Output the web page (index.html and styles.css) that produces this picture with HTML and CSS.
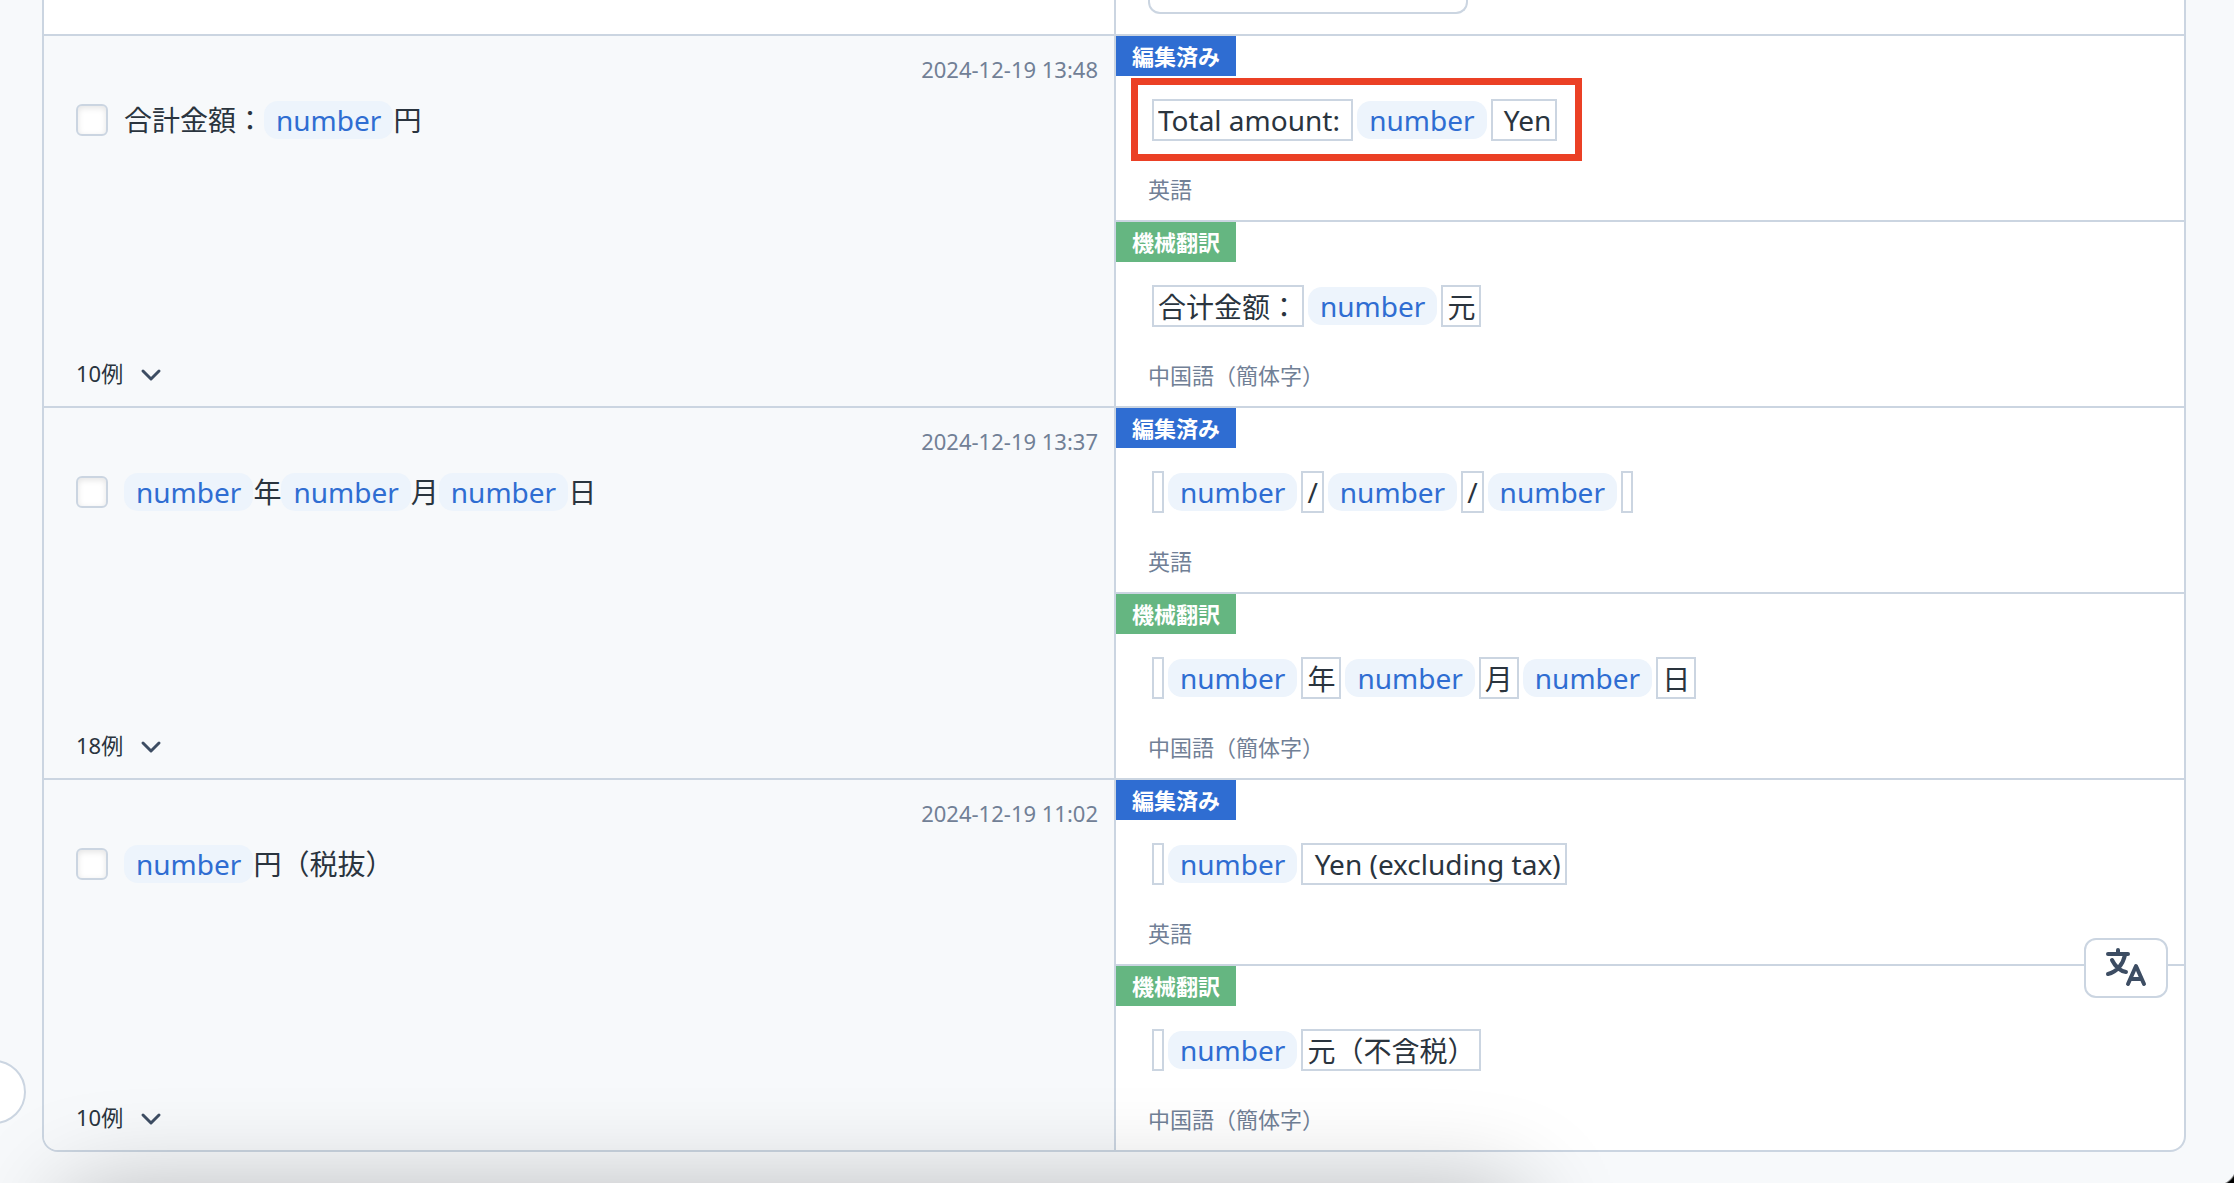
FILE: index.html
```html
<!DOCTYPE html>
<html lang="ja">
<head>
<meta charset="utf-8">
<meta name="viewport" content="width=device-width, initial-scale=1">
<title>翻訳一覧</title>
<link rel="stylesheet" href="styles.css">
</head>
<body>
<main class="page">
  <div class="list">
    <section class="row row-head">
      <div class="source source-plain"></div>
      <div class="targets"><div class="filter"></div></div>
    </section>

    <section class="row">
      <div class="source">
        <time class="date">2024-12-19 13:48</time>
        <label class="phrase"><input class="check" type="checkbox"><span class="phrase-text">合計金額：<span class="chip">number</span>円</span></label>
        <button class="examples" type="button">10例<svg class="chevron" viewBox="0 0 32 32" aria-hidden="true"><path d="M8 14l8 8 8-8"/></svg></button>
      </div>
      <div class="targets">
        <article class="target">
          <span class="tag tag-edited">編集済み</span>
          <div class="tokens tokens-marked"><input class="seg" aria-label="訳文" value="Total amount: "><span class="chip">number</span><input class="seg" aria-label="訳文" value=" Yen"></div>
          <span class="lang">英語</span>
        </article>
        <article class="target">
          <span class="tag tag-machine">機械翻訳</span>
          <div class="tokens"><input class="seg" aria-label="訳文" value="合计金额："><span class="chip">number</span><input class="seg" aria-label="訳文" value="元"></div>
          <span class="lang">中国語（簡体字）</span>
        </article>
      </div>
    </section>

    <section class="row">
      <div class="source">
        <time class="date">2024-12-19 13:37</time>
        <label class="phrase"><input class="check" type="checkbox"><span class="phrase-text"><span class="chip">number</span>年<span class="chip">number</span>月<span class="chip">number</span>日</span></label>
        <button class="examples" type="button">18例<svg class="chevron" viewBox="0 0 32 32" aria-hidden="true"><path d="M8 14l8 8 8-8"/></svg></button>
      </div>
      <div class="targets">
        <article class="target">
          <span class="tag tag-edited">編集済み</span>
          <div class="tokens"><input class="seg seg-empty" aria-label="訳文" value=""><span class="chip">number</span><input class="seg" aria-label="訳文" value="/"><span class="chip">number</span><input class="seg" aria-label="訳文" value="/"><span class="chip">number</span><input class="seg seg-empty" aria-label="訳文" value=""></div>
          <span class="lang">英語</span>
        </article>
        <article class="target">
          <span class="tag tag-machine">機械翻訳</span>
          <div class="tokens"><input class="seg seg-empty" aria-label="訳文" value=""><span class="chip">number</span><input class="seg" aria-label="訳文" value="年"><span class="chip">number</span><input class="seg" aria-label="訳文" value="月"><span class="chip">number</span><input class="seg" aria-label="訳文" value="日"></div>
          <span class="lang">中国語（簡体字）</span>
        </article>
      </div>
    </section>

    <section class="row">
      <div class="source">
        <time class="date">2024-12-19 11:02</time>
        <label class="phrase"><input class="check" type="checkbox"><span class="phrase-text"><span class="chip">number</span>円（税抜）</span></label>
        <button class="examples" type="button">10例<svg class="chevron" viewBox="0 0 32 32" aria-hidden="true"><path d="M8 14l8 8 8-8"/></svg></button>
      </div>
      <div class="targets">
        <article class="target">
          <span class="tag tag-edited">編集済み</span>
          <div class="tokens"><input class="seg seg-empty" aria-label="訳文" value=""><span class="chip">number</span><input class="seg" aria-label="訳文" value=" Yen (excluding tax)"></div>
          <span class="lang">英語</span>
        </article>
        <article class="target">
          <span class="tag tag-machine">機械翻訳</span>
          <div class="tokens"><input class="seg seg-empty" aria-label="訳文" value=""><span class="chip">number</span><input class="seg" aria-label="訳文" value="元（不含税）"></div>
          <span class="lang">中国語（簡体字）</span>
        </article>
      </div>
    </section>
  </div>
</main>

<button class="side-toggle" type="button" aria-label="サイドバー"></button>
<button class="translate" type="button" aria-label="翻訳">
  <svg viewBox="0 0 40 38" aria-hidden="true"><path d="M2 5H22M12 1V5M19 6C17 15 11 23 2 25M6 11C9 17 14 22 20 23M22 35L30 17L38 35M25 30H35"/></svg>
</button>
<div class="bottom-shade"></div>
<div class="corner"></div>
</body>
</html>
```

FILE: styles.css
```css
* { box-sizing: border-box; }

:root {
  --line: #cbd5e1;
  --ink: #2a343e;
  --muted: #718096;
  --blue: #2f6dd2;
}

body {
  margin: 0;
  min-height: 100vh;
  overflow: hidden;
  background: #f7f9fb;
  color: var(--ink);
  font: 22px/30px "Noto Sans", "Noto Sans CJK JP", sans-serif;
}

button, input { font: inherit; color: inherit; }

.page { padding: 0 48px 31px 42px; }

.list {
  overflow: hidden;
  border: 2px solid var(--line);
  border-top: 0;
  border-radius: 0 0 16px 16px;
  background: #fff;
}

.row {
  display: grid;
  grid-template-columns: calc(50% + 2px) 1fr;
}
.row + .row { border-top: 2px solid var(--line); }

.source {
  display: flex;
  flex-direction: column;
  align-items: flex-start;
  padding: 18px 16px 18px 32px;
  border-right: 2px solid var(--line);
  background: #f7f9fb;
}
.source-plain {
  padding: 0;
  background: #fff;
}

.date { align-self: flex-end; color: var(--muted); }

.phrase {
  display: flex;
  align-items: center;
  gap: 16px;
  margin-top: 17px;
  font-size: 28px;
  line-height: 38px;
}
.phrase-text { display: flex; }

.check {
  appearance: none;
  width: 32px;
  height: 32px;
  margin: 0;
  border: 2px solid var(--line);
  border-radius: 6px;
  background: #fff;
  box-shadow: inset 0 2px 6px #0000001c;
}

.chip {
  padding: 0 12px;
  border-radius: 14px;
  background: #edf4fc;
  color: var(--blue);
}

.examples {
  display: flex;
  align-items: center;
  gap: 12px;
  height: 30px;
  margin-top: auto;
  padding: 0;
  border: 0;
  background: none;
}
.chevron {
  width: 32px;
  height: 32px;
  fill: none;
  stroke: #3d4d63;
  stroke-width: 3;
  stroke-linecap: round;
  stroke-linejoin: round;
}

.filter {
  width: 320px;
  height: 14px;
  margin: 0 32px 20px;
  border: 2px solid var(--line);
  border-top: 0;
  border-radius: 0 0 12px 12px;
}

.target {
  display: flex;
  flex-direction: column;
  align-items: flex-start;
  padding-bottom: 16px;
}
.target + .target { border-top: 2px solid var(--line); }

.tag {
  padding: 5px 16px;
  color: #fff;
  font-weight: 600;
}
.tag-edited { background: var(--blue); }
.tag-machine { background: #65b681; }

.tokens {
  position: relative;
  display: flex;
  align-items: center;
  gap: 4px;
  margin: 23px 36px 33px;
  font-size: 28px;
  line-height: 38px;
}
.seg {
  field-sizing: content;
  height: 42px;
  padding: 0 4px;
  border: 2px solid var(--line);
  border-radius: 0;
  background: #fff;
}
.seg-empty { width: 12px; }

/* Callout frame drawn round the marked translation */
.tokens-marked::after {
  content: "";
  position: absolute;
  inset: -21px -25px -20px -21px;
  border: 7px solid #eb4025;
  pointer-events: none;
}

.lang { margin-left: 32px; color: var(--muted); }

.side-toggle {
  position: fixed;
  left: -38px;
  bottom: 59px;
  width: 64px;
  height: 64px;
  border: 2px solid var(--line);
  border-radius: 50%;
  background: #fff;
}

.translate {
  position: fixed;
  right: 66px;
  bottom: 185px;
  display: flex;
  align-items: center;
  justify-content: center;
  width: 84px;
  height: 60px;
  padding: 0;
  border: 2px solid var(--line);
  border-radius: 12px;
  background: #fff;
}
.translate svg {
  width: 40px;
  height: 38px;
  fill: none;
  stroke: #3d4d63;
  stroke-width: 4;
  stroke-linecap: round;
  stroke-linejoin: round;
  overflow: visible;
}

.bottom-shade {
  position: fixed;
  top: 100%;
  left: 3%;
  right: 32%;
  height: 200px;
  margin-top: 10px;
  box-shadow: 0 0 100px #00000048;
  pointer-events: none;
}

.corner {
  position: fixed;
  right: 0;
  bottom: 0;
  width: 20px;
  height: 20px;
  background: radial-gradient(circle at 1px 1px, transparent 21px, #000 23px);
  pointer-events: none;
}
```
